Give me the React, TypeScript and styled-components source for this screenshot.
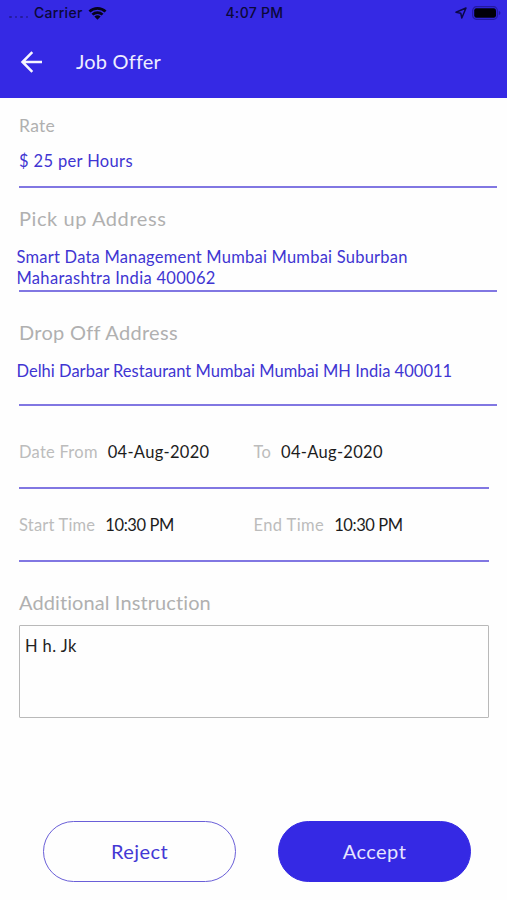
import React from "react";
import styled, { createGlobalStyle } from "styled-components";

const blue = "#3529e4";
const lineBlue = "#8177e2";

const GlobalStyle = createGlobalStyle`
  * { box-sizing: border-box; }
  body { margin: 0; background: #fefefe; font-family: Lato, sans-serif; }
`;

const Screen = styled.main`
  width: 507px;
  height: 900px;
  overflow: hidden;
  background: #fefefe;
`;

const Header = styled.header`
  height: 98px;
  background: ${blue};
`;

const StatusBar = styled.div`
  display: grid;
  grid-template-columns: 1fr auto 1fr;
  align-items: center;
  height: 26px;
  padding: 0 6px 0 8px;
  font: 500 14px/26px Inter, sans-serif;
  letter-spacing: 0.3px;
  color: #0b0838;
`;

const StatusSide = styled.div<{ $end?: boolean }>`
  display: flex;
  align-items: center;
  justify-content: ${(p) => (p.$end ? "flex-end" : "flex-start")};
  gap: 5px;
`;

const Signal = styled.span`
  display: flex;
  gap: 3px;
  margin: 8px 1px 0 1px;
  i { width: 2.5px; height: 2.5px; border-radius: 50%; background: #241b9b; }
`;

const NavBar = styled.div`
  display: flex;
  align-items: center;
  height: 72px;
  padding-left: 20px;
`;

const Title = styled.h1`
  margin: -2px 0 0 33px;
  font-size: 20px;
  font-weight: 400;
  line-height: 28px;
  letter-spacing: 0.2px;
  color: #eeedff;
`;

const Form = styled.div`
  padding: 0 18px 0 19px;
`;

const Field = styled.section<{ $height: number; $top: number; $wide?: boolean }>`
  height: ${(p) => p.$height}px;
  padding-top: ${(p) => p.$top}px;
  margin-right: ${(p) => (p.$wide ? -8 : 0)}px;
  border-bottom: 2px solid ${lineBlue};
`;

const Label = styled.h2<{ $size: number; $spacing: number }>`
  margin: 0;
  font-size: ${(p) => p.$size}px;
  font-weight: 400;
  line-height: 26px;
  letter-spacing: ${(p) => p.$spacing}px;
  color: #b0b0b0;
`;

const Value = styled.p<{ $gap: number; $spacing?: number; $outdent?: boolean }>`
  margin: ${(p) => p.$gap}px 0 0 ${(p) => (p.$outdent ? -2.5 : 0)}px;
  font-size: 16.5px;
  line-height: 21px;
  letter-spacing: ${(p) => p.$spacing ?? 0}px;
  color: #4035d2;
`;

const Line = styled.span<{ $spacing: number }>`
  display: block;
  letter-spacing: ${(p) => p.$spacing}px;
`;

const Pair = styled.div`
  display: grid;
  grid-template-columns: 234.5px 1fr;
`;

const Entry = styled.div`
  display: flex;
  align-items: baseline;
  gap: 10px;
  font-size: 16.5px;
  line-height: 24px;
`;

const Caption = styled.span<{ $spacing: number }>`
  letter-spacing: ${(p) => p.$spacing}px;
  color: #bcbcbc;
`;

const Reading = styled.span<{ $spacing: number }>`
  letter-spacing: ${(p) => p.$spacing}px;
  color: #1c1c1c;
`;

const Instructions = styled.section`
  padding-top: 27px;
`;

const Note = styled.div`
  height: 93px;
  margin-top: 10px;
  padding: 8px 5px;
  border: 1.5px solid #b9b9b9;
  border-radius: 1px;
  font-size: 16.5px;
  line-height: 24px;
  letter-spacing: 0.4px;
  color: #222;
`;

const Actions = styled.footer`
  display: flex;
  gap: 42px;
  padding: 103px 0 0 43px;
`;

const Button = styled.button<{ $filled?: boolean }>`
  width: 193px;
  height: 61px;
  padding: 0 0 2px;
  border: 1.5px solid ${(p) => (p.$filled ? blue : "#6a5fd8")};
  border-radius: 31px;
  background: ${(p) => (p.$filled ? blue : "transparent")};
  color: ${(p) => (p.$filled ? "#e6e4ff" : "#4438d4")};
  font: 400 20px/28px Lato, sans-serif;
  letter-spacing: 0.45px;
`;

const Wifi = () => (
  <svg width="19" height="14" viewBox="0 0 19 14" fill="#05031c">
    <path d="M.5 4.6a13 13 0 0 1 18 0l-1.9 2a10.200 10.200 0 0 0-14.200 0z" />
    <path d="M3.500 7.700a8.600 8.600 0 0 1 12 0l-1.900 1.900a5.900 5.900 0 0 0-8.200 0z" />
    <path d="M6.400 10.600a4.500 4.500 0 0 1 6.200 0L9.500 13.700z" />
  </svg>
);

const Location = () => (
  <svg width="12" height="12" viewBox="0 0 12 12" fill="none" stroke="#0b0746" strokeWidth="1.500" strokeLinejoin="round">
    <path d="M11 1 6.800 11 5.800 6.300 1 5.300z" />
  </svg>
);

const Battery = () => (
  <svg width="29" height="14" viewBox="0 0 29 14">
    <rect x=".7" y=".7" width="24.600" height="12.600" rx="3.800" fill="none" stroke="#2319a0" strokeWidth="1.200" />
    <rect x="2.200" y="2.200" width="21.800" height="9.600" rx="2.200" fill="#010008" />
    <path d="M26.800 5v4c1-.3 1.600-1 1.600-2s-.6-1.700-1.600-2z" fill="#2319a0" />
  </svg>
);

const BackArrow = () => (
  <svg width="23" height="22" viewBox="0 0 23 22" fill="none" stroke="#f6f5ff" strokeWidth="2.500">
    <path d="M22 11H2.500M12.300 1.200 2.500 11l9.800 9.800" />
  </svg>
);

export default function App() {
  return (
    <Screen>
      <GlobalStyle />
      <Header>
        <StatusBar>
          <StatusSide>
            <Signal><i /><i /><i /><i /></Signal>
            <span>Carrier</span>
            <Wifi />
          </StatusSide>
          <span>4:07 PM</span>
          <StatusSide $end>
            <Location />
            <Battery />
          </StatusSide>
        </StatusBar>
        <NavBar>
          <BackArrow />
          <Title>Job Offer</Title>
        </NavBar>
      </Header>
      <Form>
        <Field $height={90} $top={15} $wide>
          <Label $size={17.5} $spacing={0.3}>Rate</Label>
          <Value $gap={12} $spacing={0.35}>$ 25 per Hours</Value>
        </Field>
        <Field $height={104} $top={17} $wide>
          <Label $size={20} $spacing={0.57}>Pick up Address</Label>
          <Value $gap={16} $outdent>
            <Line $spacing={0.23}>Smart Data Management Mumbai Mumbai Suburban</Line>
            <Line $spacing={0.3}>Maharashtra India 400062</Line>
          </Value>
        </Field>
        <Field $height={114} $top={27} $wide>
          <Label $size={20} $spacing={0.3}>Drop Off Address</Label>
          <Value $gap={16} $spacing={0.02} $outdent>Delhi Darbar Restaurant Mumbai Mumbai MH India 400011</Value>
        </Field>
        <Field $height={83} $top={34}>
          <Pair>
            <Entry><Caption $spacing={0.25}>Date From</Caption><Reading $spacing={0.3}>04-Aug-2020</Reading></Entry>
            <Entry><Caption $spacing={0.25}>To</Caption><Reading $spacing={0.3}>04-Aug-2020</Reading></Entry>
          </Pair>
        </Field>
        <Field $height={73} $top={24}>
          <Pair>
            <Entry><Caption $spacing={0.2}>Start Time</Caption><Reading $spacing={-0.4}>10:30 PM</Reading></Entry>
            <Entry><Caption $spacing={0.4}>End Time</Caption><Reading $spacing={-0.4}>10:30 PM</Reading></Entry>
          </Pair>
        </Field>
        <Instructions>
          <Label $size={20} $spacing={0.1}>Additional Instruction</Label>
          <Note>H h. Jk</Note>
        </Instructions>
      </Form>
      <Actions>
        <Button>Reject</Button>
        <Button $filled>Accept</Button>
      </Actions>
    </Screen>
  );
}
